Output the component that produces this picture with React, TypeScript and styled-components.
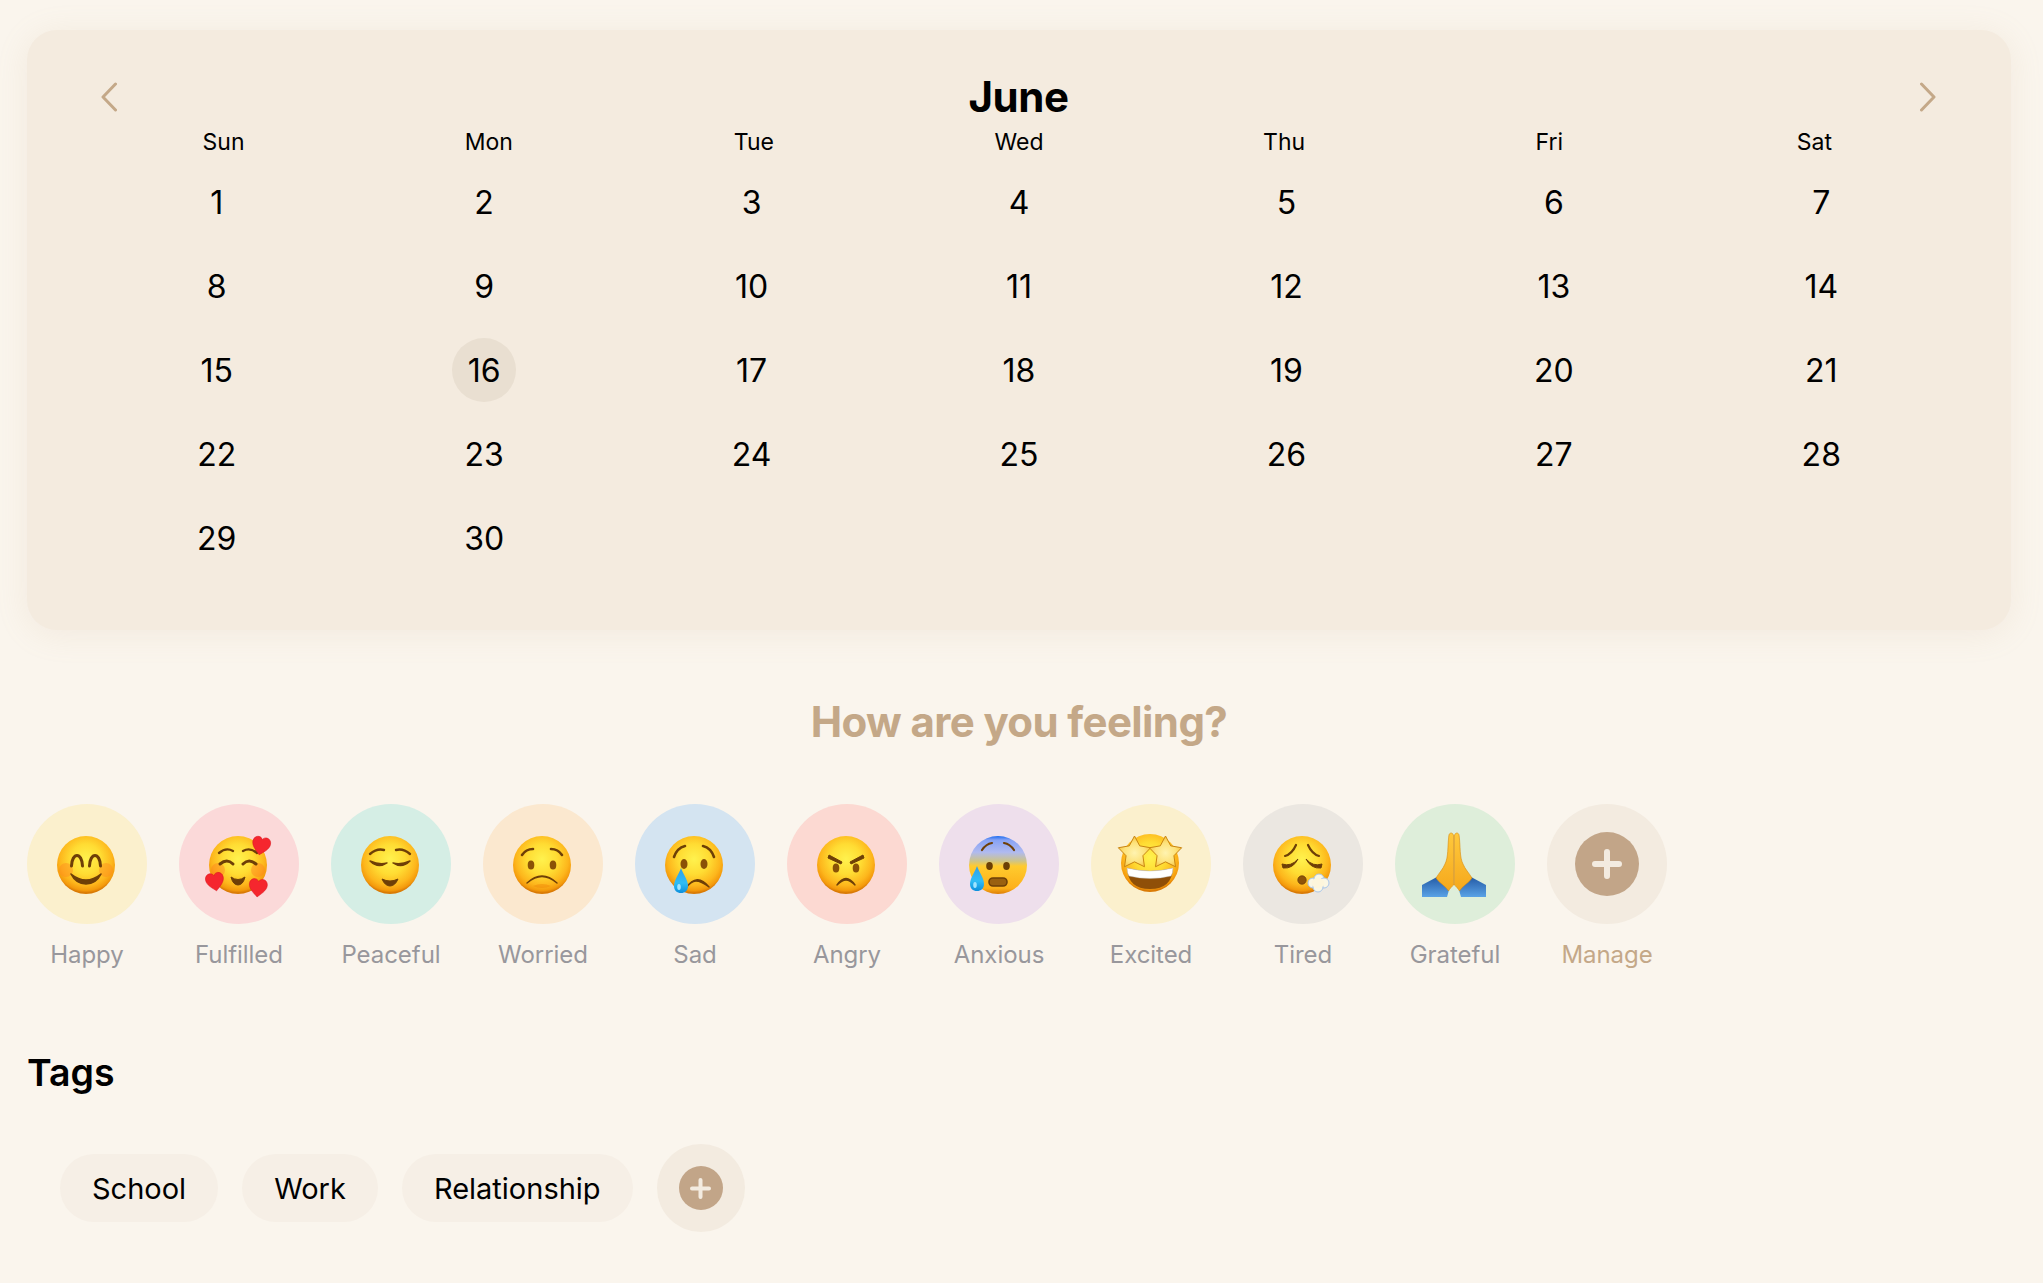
import React from "react";
import styled, { createGlobalStyle } from "styled-components";

const Global = createGlobalStyle`
  html, body { margin: 0; padding: 0; background: #faf5ed; }
  body { font-family: Inter, "Liberation Sans", sans-serif; color: #000; overflow: hidden; }
`;

const Page = styled.div`
  box-sizing: border-box;
  min-height: 1283px;
  padding: 30px 32px 0 27px;
  display: flex;
  flex-direction: column;
`;
const Card = styled.section`
  background: #f4ebdf;
  border-radius: 30px;
  padding: 41px 0 50px;
  box-shadow: 0 4px 32px rgba(196, 168, 136, 0.14);
`;
const Header = styled.header`
  display: flex;
  align-items: center;
  justify-content: space-between;
  height: 52px;
  padding: 0 75px 0 74px;
`;
const Month = styled.h1`
  margin: 0;
  font-size: 42px;
  line-height: 52px;
  font-weight: 700;
  letter-spacing: -0.5px;
`;
const Chevron = styled.svg`
  display: block;
  width: 16px;
  height: 30px;
  fill: none;
  stroke: #c4a888;
  stroke-width: 3;
  stroke-linecap: round;
  stroke-linejoin: round;
`;
const Weekdays = styled.div`
  display: grid;
  grid-template-columns: repeat(7, 1fr);
  margin: 0 64px;
  padding-top: 2px;
`;
const Weekday = styled.div`
  text-align: center;
  font-size: 23px;
  line-height: 35px;
`;
const Days = styled.div`
  display: grid;
  grid-template-columns: repeat(7, 1fr);
  grid-auto-rows: 84px;
  margin: 0 56px;
`;
const DayCell = styled.div`
  display: flex;
  align-items: center;
  justify-content: center;
`;
const DayNumber = styled.span<{ $today?: boolean }>`
  width: 64px;
  height: 64px;
  border-radius: 50%;
  display: flex;
  align-items: center;
  justify-content: center;
  font-size: 32px;
  background: ${(p) => (p.$today ? "#e9dfd1" : "transparent")};
`;
const Question = styled.h2`
  margin: 66px 0 56px;
  text-align: center;
  font-size: 42px;
  line-height: 52px;
  font-weight: 700;
  color: #c4a888;
  letter-spacing: -0.62px;
`;
const Moods = styled.div`
  display: flex;
  gap: 32px;
`;
const Mood = styled.div`
  width: 120px;
  display: flex;
  flex-direction: column;
  align-items: center;
  gap: 16px;
`;
const MoodCircle = styled.div<{ $bg: string }>`
  width: 120px;
  height: 120px;
  border-radius: 50%;
  background: ${(p) => p.$bg};
  display: flex;
  align-items: center;
  justify-content: center;
`;
const MoodLabel = styled.span<{ $accent?: boolean }>`
  font-size: 24px;
  line-height: 30px;
  white-space: nowrap;
  letter-spacing: -0.05px;
  color: ${(p) => (p.$accent ? "#c4a888" : "#98979c")};
`;
const EmojiSvg = styled.svg`
  display: block;
  width: 80px;
  height: 80px;
  overflow: visible;
`;
const PlusDisc = styled.div<{ $size: number }>`
  width: ${(p) => p.$size}px;
  height: ${(p) => p.$size}px;
  border-radius: 50%;
  background: #c2a588;
  display: flex;
  align-items: center;
  justify-content: center;
`;
const PlusIcon = styled.svg`
  display: block;
  stroke: #f3ebe0;
  stroke-linecap: round;
  fill: none;
`;
const TagsTitle = styled.h3`
  margin: 80px 0 48px;
  font-size: 37.500px;
  line-height: 46px;
  font-weight: 600;
`;
const TagRow = styled.div`
  display: flex;
  align-items: center;
  gap: 24px;
  padding-left: 33px;
`;
const Tag = styled.span`
  height: 68px;
  padding: 0 32px;
  border-radius: 34px;
  background: #f6efe6;
  display: flex;
  align-items: center;
  font-size: 29px;
`;
const TagAdd = styled.div`
  width: 88px;
  height: 88px;
  border-radius: 50%;
  background: #f3ebe0;
  display: flex;
  align-items: center;
  justify-content: center;
`;

const Plus = ({ size, weight }: { size: number; weight: number }) => (
  <PlusIcon width={size} height={size} viewBox={`0 0 ${size} ${size}`} strokeWidth={weight}>
    <path d={`M${size / 2} ${weight / 2}V${size - weight / 2}M${weight / 2} ${size / 2}H${size - weight / 2}`} />
  </PlusIcon>
);

const BROWN = "#6e3f07";

const Face = ({ id, fill }: { id: string; fill?: string }) => (
  <>
    <defs>
      <radialGradient id={`${id}-g`} cx="50%" cy="40%" r="58%">
        <stop offset="0" stopColor="#fff24e" />
        <stop offset="0.45" stopColor="#ffdc33" />
        <stop offset="0.78" stopColor="#fdb61c" />
        <stop offset="0.93" stopColor="#f49a0c" />
        <stop offset="1" stopColor="#d97a05" />
      </radialGradient>
    </defs>
    <circle r="29" fill={fill || `url(#${id}-g)`} />
  </>
);

const Heart = ({ x, y, s = 1, r = 0 }: { x: number; y: number; s?: number; r?: number }) => (
  <path
    transform={`translate(${x} ${y}) rotate(${r}) scale(${s})`}
    d="M0 9C-3 6 -9 2 -9 -3.500C-9 -7 -6.500 -9 -4 -9C-2 -9 -.7 -8 0 -6.300C.7 -8 2 -9 4 -9C6.500 -9 9 -7 9 -3.500C9 2 3 6 0 9Z"
    fill="#f5262e"
    stroke="#d8141c"
    strokeWidth=".5"
  />
);

const Tear = ({ id, x, y }: { id: string; x: number; y: number }) => (
  <>
    <defs>
      <linearGradient id={`${id}-t`} x1="0" y1="0" x2="0" y2="1">
        <stop offset="0" stopColor="#2f9ee8" />
        <stop offset="0.6" stopColor="#30bdf5" />
        <stop offset="1" stopColor="#0c8fdc" />
      </linearGradient>
    </defs>
    <path
      transform={`translate(${x} ${y})`}
      d="M0 -14C2 -8 7 -2 7 4C7 8.500 4 11 0 11C-4 11 -7 8.500 -7 4C-7 -2 -2 -8 0 -14Z"
      fill={`url(#${id}-t)`}
    />
    <ellipse cx={x - 2} cy={y + 5} rx="1.800" ry="3" fill="#9fe4ff" />
  </>
);

const Star = ({ x, y, r }: { x: number; y: number; r: number }) => {
  const pts: string[] = [];
  for (let i = 0; i < 10; i++) {
    const a = (Math.PI / 5) * i - Math.PI / 2;
    const rad = i % 2 === 0 ? r : r * 0.52;
    pts.push(`${(x + rad * Math.cos(a)).toFixed(2)},${(y + rad * Math.sin(a)).toFixed(2)}`);
  }
  return <polygon points={pts.join(" ")} fill="url(#exc-star)" stroke="#c98512" strokeWidth="1" strokeLinejoin="round" />;
};

const Line = ({ d, w = 2.400 }: { d: string; w?: number }) => (
  <path d={d} fill="none" stroke={BROWN} strokeWidth={w} strokeLinecap="round" />
);

const EmojiFrame = ({ children }: { children: React.ReactNode }) => (
  <EmojiSvg viewBox="-39 -41 80 80">{children}</EmojiSvg>
);

const Happy = () => (
  <EmojiFrame>
    <Face id="hap" />
    <circle cx="-20" cy="5" r="7" fill="#ff8a1e" opacity=".45" />
    <circle cx="20" cy="5" r="7" fill="#ff8a1e" opacity=".45" />
    <Line d="M-14.500 1C-14 -13 -4 -13 -3.500 1" w={3} />
    <Line d="M3.500 1C4 -13 14 -13 14.500 1" w={3} />
    <path d="M-15 9Q0 21 15 9Q10 19 0 19Q-10 19 -15 9Z" fill={BROWN} stroke={BROWN} strokeWidth="1.600" strokeLinejoin="round" />
  </EmojiFrame>
);

const Fulfilled = () => (
  <EmojiFrame>
    <Face id="ful" />
    <circle cx="-20" cy="5" r="7" fill="#ff7a1e" opacity=".4" />
    <circle cx="20" cy="5" r="7" fill="#ff7a1e" opacity=".4" />
    <Line d="M-19 -12Q-12 -18 -5 -14" />
    <Line d="M19 -12Q12 -18 5 -14" />
    <Line d="M-18 -1Q-11 -7 -5 -1" w={3} />
    <Line d="M18 -1Q11 -7 5 -1" w={3} />
    <path d="M-7 12Q0 17 7 12Q5 20 0 20Q-5 20 -7 12Z" fill={BROWN} stroke={BROWN} strokeLinejoin="round" />
    <Heart x={23} y={-19} r={12} />
    <Heart x={-23} y={17} r={-10} />
    <Heart x={20} y={23} r={6} />
  </EmojiFrame>
);

const Peaceful = () => (
  <EmojiFrame>
    <Face id="pea" />
    <Line d="M-20 -11Q-13 -17 -6 -15" />
    <Line d="M20 -11Q13 -17 6 -15" />
    <path d="M-20 -4Q-12 4 -3 -2Q-11 0 -20 -4Z" fill={BROWN} stroke={BROWN} strokeWidth="1.400" strokeLinejoin="round" />
    <path d="M20 -4Q12 4 3 -2Q11 0 20 -4Z" fill={BROWN} stroke={BROWN} strokeWidth="1.400" strokeLinejoin="round" />
    <path d="M-8 14Q0 18 8 14Q5 21 0 21Q-5 21 -8 14Z" fill={BROWN} stroke={BROWN} strokeLinejoin="round" />
  </EmojiFrame>
);

const Worried = () => (
  <EmojiFrame>
    <Face id="wor" />
    <Line d="M-20 -10Q-16 -16 -9 -16" w={2.600} />
    <Line d="M20 -10Q16 -16 9 -16" w={2.600} />
    <ellipse cx="-11" cy="0" rx="3.300" ry="4.500" fill="#8a5207" />
    <ellipse cx="11" cy="0" rx="3.300" ry="4.500" fill="#8a5207" />
    <path d="M-15 18Q0 4 15 18Q7 11.500 0 11.500Q-7 11.500 -15 18Z" fill={BROWN} stroke={BROWN} strokeWidth="1.400" strokeLinejoin="round" />
    <path d="M-9 21Q0 17 9 21Q0 25 -9 21Z" fill="#f08a0a" opacity=".5" />
  </EmojiFrame>
);

const Sad = () => (
  <EmojiFrame>
    <Face id="sad" />
    <Line d="M-20 -8Q-17 -17 -9 -19" w={2.600} />
    <Line d="M20 -8Q17 -17 9 -19" w={2.600} />
    <ellipse cx="-10" cy="-1" rx="3.500" ry="5" fill="#8a5207" />
    <ellipse cx="10" cy="-1" rx="3.500" ry="5" fill="#8a5207" />
    <path d="M-8 23Q3 7 15 22Q7 16 2 16Q-3 16 -8 23Z" fill={BROWN} stroke={BROWN} strokeWidth="1.400" strokeLinejoin="round" />
    <Tear id="sad" x={-13} y={17} />
  </EmojiFrame>
);

const Angry = () => (
  <EmojiFrame>
    <Face id="ang" />
    <path d="M-17 -10L-4 -3L-5 -1L-18 -7Z" fill={BROWN} stroke={BROWN} strokeLinejoin="round" />
    <path d="M17 -10L4 -3L5 -1L18 -7Z" fill={BROWN} stroke={BROWN} strokeLinejoin="round" />
    <ellipse cx="-10" cy="3" rx="3.300" ry="4.500" fill="#8a5207" />
    <ellipse cx="10" cy="3" rx="3.300" ry="4.500" fill="#8a5207" />
    <path d="M-9 20Q0 7 9 20Q4 15 0 15Q-4 15 -9 20Z" fill={BROWN} stroke={BROWN} strokeWidth="1.400" strokeLinejoin="round" />
  </EmojiFrame>
);

const Anxious = () => (
  <EmojiFrame>
    <defs>
      <linearGradient id="anx-b" x1="0" y1="0" x2="0" y2="1">
        <stop offset="0" stopColor="#1c6cf0" />
        <stop offset="0.07" stopColor="#86a2f5" />
        <stop offset="0.28" stopColor="#b0baf0" />
        <stop offset="0.43" stopColor="#cdc48a" />
        <stop offset="0.52" stopColor="#ffcb2e" />
        <stop offset="0.9" stopColor="#fdb01a" />
        <stop offset="1" stopColor="#dd7e06" />
      </linearGradient>
    </defs>
    <Face id="anx" fill="url(#anx-b)" />
    <Line d="M-16 -15Q-12 -21 -6 -22" w={2.200} />
    <Line d="M16 -15Q12 -21 6 -22" w={2.200} />
    <ellipse cx="-8.500" cy="1" rx="3.300" ry="4" fill="#6b3f05" />
    <ellipse cx="8.500" cy="1" rx="3.300" ry="4" fill="#6b3f05" />
    <rect x="-9" y="13" width="18" height="8" rx="4" fill="#9a6010" stroke={BROWN} strokeWidth="1.600" />
    <Tear id="anx" x={-21} y={15} />
  </EmojiFrame>
);

const Excited = () => (
  <EmojiFrame>
    <defs>
      <radialGradient id="exc-star" cx="50%" cy="55%" r="55%">
        <stop offset="0" stopColor="#fff3b0" />
        <stop offset="0.6" stopColor="#fde27a" />
        <stop offset="1" stopColor="#f7c33c" />
      </radialGradient>
    </defs>
    <g transform="translate(0 -2)">
      <Face id="exc" />
      <path d="M-23 5Q0 11 23 5Q22 26 0 26Q-22 26 -23 5Z" fill="#8f4f08" />
      <path d="M-23 5Q0 11 23 5Q23 10 21 13Q0 18 -21 13Q-23 10 -23 5Z" fill="#fff" stroke="#b8b8b8" strokeWidth=".4" />
      <Star x={-15.500} y={-10} r={17} />
      <Star x={15.500} y={-10} r={17} />
    </g>
  </EmojiFrame>
);

const Tired = () => (
  <EmojiFrame>
    <Face id="tir" />
    <Line d="M-17 -9Q-10 -11 -6 -20" w={2.200} />
    <Line d="M17 -9Q10 -11 6 -20" w={2.200} />
    <path d="M-20 -1Q-11 2 -4 -6Q-9 4 -19 3Z" fill={BROWN} stroke={BROWN} strokeLinejoin="round" />
    <path d="M20 -1Q11 2 4 -6Q9 4 19 3Z" fill={BROWN} stroke={BROWN} strokeLinejoin="round" />
    <circle cx="0" cy="15" r="4.200" fill="#8f5408" stroke={BROWN} strokeWidth=".8" />
    <g fill="#fbf7e4" stroke="#a9c6ea" strokeWidth="1">
      <circle cx="11" cy="18" r="5" />
      <circle cx="17" cy="14" r="5" />
      <circle cx="22" cy="18" r="5" />
      <circle cx="16" cy="22" r="5" />
    </g>
    <ellipse cx="16" cy="18" rx="6.500" ry="5" fill="#fdf6dc" />
  </EmojiFrame>
);

const Grateful = () => (
  <EmojiFrame>
    <defs>
      <linearGradient id="gra-s" x1="0" y1="0" x2="0" y2="1">
        <stop offset="0" stopColor="#245ba6" />
        <stop offset="1" stopColor="#5aa2e6" />
      </linearGradient>
      <linearGradient id="gra-h" x1="0" y1="0" x2="0" y2="1">
        <stop offset="0" stopColor="#ffc93c" />
        <stop offset="1" stopColor="#f5a81c" />
      </linearGradient>
    </defs>
    <path d="M-32 20L-17 12L-5 25L-7 32L-32 32Z" fill="url(#gra-s)" />
    <path d="M32 20L17 12L5 25L7 32L32 32Z" fill="url(#gra-s)" />
    <path d="M-.4 -29C-.8 -33 -5 -33 -5.200 -29C-6.500 -18 -5.500 -8 -9 -1C-11 4 -15 8 -18 13C-15 18 -8 21 -5.500 26C-3 22 -.4 20 -.4 20Z" fill="url(#gra-h)" stroke="#d9890b" strokeWidth=".6" />
    <path d="M.4 -29C.8 -33 5 -33 5.200 -29C6.500 -18 5.500 -8 9 -1C11 4 15 8 18 13C15 18 8 21 5.500 26C3 22 .4 20 .4 20Z" fill="url(#gra-h)" stroke="#d9890b" strokeWidth=".6" />
  </EmojiFrame>
);

const Arrow = ({ d }: { d: string }) => (
  <Chevron viewBox="0 0 16 30">
    <path d={d} />
  </Chevron>
);

const WEEK = ["Sun", "Mon", "Tue", "Wed", "Thu", "Fri", "Sat"];
const DAYS = Array.from({ length: 30 }, (_, i) => i + 1);
const MOODS = [
  { label: "Happy", bg: "#fbf0cd", Icon: Happy },
  { label: "Fulfilled", bg: "#fbd9d9", Icon: Fulfilled },
  { label: "Peaceful", bg: "#d5eee5", Icon: Peaceful },
  { label: "Worried", bg: "#fbe8cf", Icon: Worried },
  { label: "Sad", bg: "#d4e4f1", Icon: Sad },
  { label: "Angry", bg: "#fcd9d2", Icon: Angry },
  { label: "Anxious", bg: "#eedfec", Icon: Anxious },
  { label: "Excited", bg: "#fbf0cd", Icon: Excited },
  { label: "Tired", bg: "#ebe7e1", Icon: Tired },
  { label: "Grateful", bg: "#deeeda", Icon: Grateful },
];
const TAGS = ["School", "Work", "Relationship"];

export default function App() {
  return (
    <Page>
      <Global />
      <Card>
        <Header>
          <Arrow d="M14.500 2L2 15L14.500 28" />
          <Month>June</Month>
          <Arrow d="M1.500 2L14 15L1.500 28" />
        </Header>
        <Weekdays>
          {WEEK.map((d) => (
            <Weekday key={d}>{d}</Weekday>
          ))}
        </Weekdays>
        <Days>
          {DAYS.map((d) => (
            <DayCell key={d}>
              <DayNumber $today={d === 16}>{d}</DayNumber>
            </DayCell>
          ))}
        </Days>
      </Card>
      <Question>How are you feeling?</Question>
      <Moods>
        {MOODS.map(({ label, bg, Icon }) => (
          <Mood key={label}>
            <MoodCircle $bg={bg}>
              <Icon />
            </MoodCircle>
            <MoodLabel>{label}</MoodLabel>
          </Mood>
        ))}
        <Mood>
          <MoodCircle $bg="#f3ebe0">
            <PlusDisc $size={64}>
              <Plus size={30} weight={6} />
            </PlusDisc>
          </MoodCircle>
          <MoodLabel $accent>Manage</MoodLabel>
        </Mood>
      </Moods>
      <TagsTitle>Tags</TagsTitle>
      <TagRow>
        {TAGS.map((t) => (
          <Tag key={t}>{t}</Tag>
        ))}
        <TagAdd>
          <PlusDisc $size={44}>
            <Plus size={21} weight={4} />
          </PlusDisc>
        </TagAdd>
      </TagRow>
    </Page>
  );
}
